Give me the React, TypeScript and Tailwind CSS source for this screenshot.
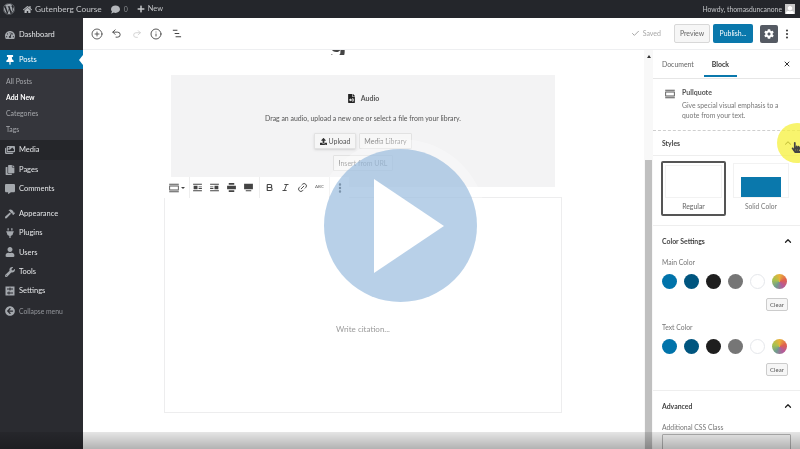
import { Bold, Check, ChevronUp, CirclePlus, Info, Italic, Link2, MoreVertical, Redo2, Undo2, X } from 'lucide-react';
import {
  FaArrowCircleLeft,
  FaCog,
  FaComment,
  FaCommentAlt,
  FaCopy,
  FaFileAudio,
  FaHammer,
  FaHandPointer,
  FaHome,
  FaImages,
  FaPlug,
  FaPlus,
  FaTachometerAlt,
  FaThumbtack,
  FaUpload,
  FaUser,
  FaUserAlt,
  FaWordpress,
  FaWrench,
} from 'react-icons/fa';
import type { ComponentType, ReactNode } from 'react';

type Icon = ComponentType<{ className?: string }>;

function SettingsIcon({ className }: { className?: string }) {
  return (
    <svg viewBox="0 0 20 20" className={className} fill="currentColor">
      <path d="M1 1h18v18H1zM4 5v2h5v2h2V7h5V5h-5V3H9v2zM4 13v2h3v2h2v-2h7v-2H9v-2H7v2z" fillRule="evenodd" />
    </svg>
  );
}

const GROUP_TWO: [Icon, string][] = [
  [FaHammer, 'Appearance'],
  [FaPlug, 'Plugins'],
  [FaUser, 'Users'],
  [FaWrench, 'Tools'],
  [SettingsIcon, 'Settings'],
];

const SWATCHES = [
  'bg-[#0073aa]',
  'bg-[#00557f]',
  'bg-[#1e1e1e]',
  'bg-[#767676]',
  'bg-white border border-gray-200',
  'bg-[conic-gradient(#e8b23a,#e0604e,#b55a9c,#6f9c8f,#a8c24e,#e8b23a)]',
];

function BlockIcon({ className }: { className: string }) {
  return (
    <svg viewBox="0 0 20 20" className={className} fill="currentColor">
      <path d="M2 3h16v1.5H2zM2 15.5h16V17H2z" />
      <path d="M2 6h16v8H2zm1.5 1.5v5h13v-5z" fillRule="evenodd" />
    </svg>
  );
}

function AlignIcon({ variant }: { variant: number }) {
  const paths = [
    'M2 3h16v2H2zM2 15h16v2H2zM3 7h7v6H3zM12 8h6v1.5h-6zM12 11h6v1.5h-6z',
    'M2 3h16v2H2zM2 15h16v2H2zM10 7h7v6h-7zM2 8h6v1.5H2zM2 11h6v1.5H2z',
    'M5 2h10v3H5zM5 15h10v3H5zM2 7h16v6H2z',
    'M2 3h16v10H2zM5 15h10v2H5z',
  ];
  return (
    <svg viewBox="0 0 20 20" className="size-[11px] text-[#444]" fill="currentColor">
      <path d={paths[variant]} />
    </svg>
  );
}

function MenuRow({ icon: I, label, h = 'h-[19px]' }: { icon: Icon; label: string; h?: string }) {
  return (
    <div className={`flex items-center ${h} pl-[5px] text-[7.5px] text-[#e4e6e8]`}>
      <I className="size-[10px] text-[#a4a8ad] mr-[4px]" />
      <span>{label}</span>
    </div>
  );
}

function Sidebar() {
  return (
    <aside className="w-[83px] shrink-0 bg-[#2a2b30] flex flex-col pt-[7px]">
      <MenuRow icon={FaTachometerAlt} label="Dashboard" h="h-[20px]" />
      <div className="h-[5px]" />
      <div className="relative flex items-center h-[19px] pl-[5px] bg-[#0073aa] text-[7.5px] text-white">
        <FaThumbtack className="size-[10px] mr-[4px]" />
        Posts
        <div className="absolute right-0 top-[5px] border-y-[5px] border-r-[4px] border-y-transparent border-r-white" />
      </div>
      <div className="bg-[#35363c] h-[71px] pl-[6px] pt-[6px] flex flex-col gap-[3px] text-[6.9px] leading-[13px] text-[#a6a8ac]">
        <div>All Posts</div>
        <div className="text-white font-bold">Add New</div>
        <div>Categories</div>
        <div>Tags</div>
      </div>
      <div className="bg-[#25262a]">
        <MenuRow icon={FaImages} label="Media" h="h-[20px]" />
      </div>
      <MenuRow icon={FaCopy} label="Pages" />
      <MenuRow icon={FaCommentAlt} label="Comments" />
      <div className="h-[6px]" />
      {GROUP_TWO.map(([i, l]) => (
        <MenuRow key={l} icon={i} label={l} h="h-[19.3px]" />
      ))}
      <div className="flex items-center h-[21px] pl-[5px] text-[6.8px] text-[#92959a]">
        <FaArrowCircleLeft className="size-[10px] text-[#a4a8ad] mr-[4px]" />
        Collapse menu
      </div>
    </aside>
  );
}

function TopBar() {
  return (
    <header className="h-[18px] shrink-0 bg-[#24262b] flex items-center text-[7px] text-[#c4c6c9] pl-[3px] pr-[5px]">
      <FaWordpress className="size-[12px] text-[#a4a8ad]" />
      <FaHome className="size-[9px] text-[#b4b7bb] ml-[8px]" />
      <span className="ml-[3px] text-[8.3px]">Gutenberg Course</span>
      <FaComment className="size-[9px] text-[#b4b7bb] ml-[9px]" />
      <span className="ml-[4px] text-[#8b8e92]">0</span>
      <FaPlus className="size-[8px] text-[#c4c6c9] ml-[9px]" />
      <span className="ml-[3px] text-[7.4px]">New</span>
      <span className="ml-auto text-[6.8px]">Howdy, thomasduncanone</span>
      <span className="ml-[3px] size-[10px] bg-[#c8c8c8] flex items-end justify-center overflow-hidden">
        <FaUserAlt className="size-[8px] text-white" />
      </span>
    </header>
  );
}

function EditorToolbar() {
  return (
    <div className="h-[32px] shrink-0 bg-white border-b border-[#eeeff1] flex items-center pl-[8px] pr-[7px]">
      <CirclePlus className="size-[12px] text-[#444]" strokeWidth={1.7} />
      <Undo2 className="size-[11px] text-[#444] ml-[8px]" strokeWidth={2} />
      <Redo2 className="size-[10px] text-[#ccc] ml-[10px]" strokeWidth={2} />
      <Info className="size-[12px] text-[#444] ml-[8px]" strokeWidth={1.8} />
      <svg viewBox="0 0 12 12" className="size-[11px] text-[#444] ml-[9px]" fill="currentColor">
        <path d="M2 2h5v1H2zM4 5.5h5v1H4zM5 9h6v1H5z" />
      </svg>
      <Check className="size-[9px] text-[#888] ml-auto" strokeWidth={2} />
      <span className="ml-[3px] text-[7px] text-[#a8a8a8]">Saved</span>
      <button className="ml-[13px] w-[36px] h-[19px] rounded-[2px] border border-[#d8d8d8] bg-[#f6f6f6] text-[6.9px] text-[#666]">Preview</button>
      <button className="ml-[3px] w-[40px] h-[19px] rounded-[2px] bg-[#0a78ac] text-[6.9px] text-white">Publish...</button>
      <button className="ml-[7px] size-[18px] rounded-[2px] bg-[#555a63] flex items-center justify-center">
        <FaCog className="size-[10px] text-white" />
      </button>
      <MoreVertical className="size-[12px] text-[#444] ml-[3px]" strokeWidth={2.4} />
    </div>
  );
}

function Ghost({ children, className = '' }: { children: ReactNode; className?: string }) {
  return (
    <span className={`h-[16px] flex items-center justify-center rounded-[1px] border border-[#e2e2e2] text-[7px] whitespace-nowrap ${className}`}>
      {children}
    </span>
  );
}

function AudioBlock() {
  return (
    <div className="ml-[88px] w-[384px] h-[112px] bg-[#f3f3f4] flex flex-col items-center pt-[17px] text-[#555]">
      <div className="flex items-center gap-[5px] text-[7px] font-bold h-[12px]">
        <FaFileAudio className="size-[9px] text-[#222]" />
        Audio
      </div>
      <div className="mt-[8px] text-[6.9px] leading-[12px] whitespace-nowrap">Drag an audio, upload a new one or select a file from your library.</div>
      <div className="mt-[9px] flex gap-[3px]">
        <Ghost className="border-[#d4d4d4] bg-[#f6f6f6] w-[42px] shadow-sm gap-[2px]">
          <FaUpload className="size-[7px] text-[#333]" />
          Upload
        </Ghost>
        <Ghost className="w-[53px] bg-[#f7f7f7] text-[#8a8a8a]">Media Library</Ghost>
      </div>
      <Ghost className="mt-[6px] w-[60px] bg-[#f7f7f7] text-[#8a8a8a]">Insert from URL</Ghost>
    </div>
  );
}

function FloatingToolbar() {
  return (
    <div className="absolute left-[81px] top-[127px] w-[185px] h-[21px] bg-white flex items-center text-[#444]">
      <div className="w-[26px] h-full flex items-center justify-center gap-[1px] border-r border-[#eee]">
        <BlockIcon className="size-[12px] text-[#555]" />
        <span className="border-x-[2px] border-t-[2px] border-x-transparent border-t-[#444]" />
      </div>
      <div className="w-[70px] h-full flex items-center justify-between pl-[2px] pr-[5px] border-r border-[#eee]">
        <AlignIcon variant={0} />
        <AlignIcon variant={1} />
        <AlignIcon variant={2} />
        <AlignIcon variant={3} />
      </div>
      <div className="w-[70px] h-full flex items-center justify-between px-[5px] border-r border-[#eee]">
        <Bold className="size-[9px]" strokeWidth={3} />
        <Italic className="size-[9px]" strokeWidth={2.5} />
        <Link2 className="size-[11px] -rotate-45" strokeWidth={2} />
        <span className="text-[4.5px] text-[#666]">ABC</span>
      </div>
      <MoreVertical className="size-[12px] ml-[4px] text-black" strokeWidth={2.8} />
    </div>
  );
}

function SwatchRow() {
  return (
    <div className="flex gap-[7px] mt-[6px]">
      {SWATCHES.map(s => (
        <span key={s} className={`size-[15px] rounded-full ${s}`} />
      ))}
    </div>
  );
}

function ClearButton() {
  return (
    <div className="flex justify-end mt-[9px] pr-[5px]">
      <span className="w-[22px] h-[13px] flex items-center justify-center rounded-[2px] border border-[#ccc] bg-[#f6f6f6] text-[6px] text-[#555]">
        Clear
      </span>
    </div>
  );
}

function RightPanel() {
  return (
    <aside className="w-[147px] shrink-0 bg-white flex flex-col text-[#444] overflow-hidden">
      <div className="h-[29px] shrink-0 flex items-center border-b border-[#e6e6e6] pl-[9px] pr-[9px] text-[6.9px]">
        <span className="text-[#666]">Document</span>
        <span className="relative h-full flex items-center ml-[17px] font-bold text-[#333] px-[1px]">
          Block
          <span className="absolute -left-[7px] -right-[7px] bottom-[1px] h-[2px] bg-[#0a78ac]" />
        </span>
        <X className="size-[8px] ml-auto text-[#333]" strokeWidth={3} />
      </div>
      <div className="h-[52px] shrink-0 border-b border-dashed border-[#cfcfcf] flex pl-[11px] pt-[7px]">
        <BlockIcon className="size-[12px] text-[#555] mt-[2px] shrink-0" />
        <div className="ml-[6px]">
          <div className="text-[7px] leading-[12px] font-bold text-[#555]">Pullquote</div>
          <div className="text-[6.8px] leading-[10px] text-[#777] mt-[2px] w-[104px]">
            Give special visual emphasis to a quote from your text.
          </div>
        </div>
      </div>
      <div className="h-[25px] shrink-0 flex items-center border-b border-[#eee] pl-[9px] pr-[7px] text-[6.8px] font-bold">
        Styles
        <ChevronUp className="size-[10px] ml-auto text-[#333]" strokeWidth={2.5} />
      </div>
      <div className="h-[70px] shrink-0 flex gap-[5px] pl-[8px] pt-[5px] border-b border-[#eee]">
        <div className="w-[65px] h-[55px] rounded-[2px] border-2 border-[#555] p-[2px] flex flex-col items-center">
          <div className="w-full h-[33px] border border-[#f2f2f2]" />
          <div className="text-[6.9px] text-[#666] mt-[3px]">Regular</div>
        </div>
        <div className="w-[60px] h-[55px] p-[2px] flex flex-col items-center">
          <div className="w-full h-[35px] border border-[#f2f2f2] flex items-end justify-center">
            <div className="w-[40px] h-[20px] bg-[#0a78ac]" />
          </div>
          <div className="text-[6.7px] text-[#777] mt-[3px]">Solid Color</div>
        </div>
      </div>
      <div className="h-[165px] shrink-0 border-b border-[#eee] pl-[9px] pr-[7px] pt-[9px]">
        <div className="flex items-center justify-between text-[6.9px] font-bold h-[12px]">
          Color Settings
          <ChevronUp className="size-[10px] text-[#222]" strokeWidth={3} />
        </div>
        <div className="mt-[9px] text-[6.8px] leading-[12px] text-[#777]">Main Color</div>
        <SwatchRow />
        <ClearButton />
        <div className="mt-[10px] text-[6.8px] leading-[12px] text-[#777]">Text Color</div>
        <SwatchRow />
        <ClearButton />
      </div>
      <div className="pl-[9px] pr-[7px] pt-[9px]">
        <div className="flex items-center justify-between text-[6.9px] font-bold h-[12px]">
          Advanced
          <ChevronUp className="size-[10px] text-[#222]" strokeWidth={3} />
        </div>
        <div className="mt-[9px] text-[6.8px] leading-[12px] text-[#777]">Additional CSS Class</div>
        <div className="mt-[1px] w-[129px] h-[20px] border border-[#bbb] rounded-[1px]" />
      </div>
    </aside>
  );
}

export default function App() {
  return (
    <div
      className="relative w-[800px] h-[449px] overflow-hidden bg-white flex flex-col blur-[0.35px]"
      style={{ fontFamily: 'Lato, "Noto Sans", sans-serif' }}
    >
      <TopBar />
      <div className="flex flex-1 min-h-0">
        <Sidebar />
        <div className="flex-1 min-w-0 flex flex-col">
          <EditorToolbar />
          <div className="flex flex-1 min-h-0">
            <main className="relative flex-1 min-w-0 bg-white overflow-hidden pt-[25px]">
              {/* bottom of the post title scrolled under the toolbar */}
              <div className="absolute left-[246px] top-0 w-[20px] h-[5px] overflow-hidden">
                <div className="absolute bottom-0 left-0 font-['Noto_Sans'] text-[28px] leading-none font-bold text-[#444]">g</div>
              </div>
              <AudioBlock />
              <div className="absolute left-[81px] top-[147px] w-[398px] h-[216px] border border-[#ededee] flex items-end justify-center pb-[77px] text-[8px] text-[#9a9a9a]">
                Write citation...
              </div>
              <FloatingToolbar />
            </main>
            <div className="w-[9px] shrink-0 bg-[#f8f8f8] flex flex-col items-center">
              <div className="h-[12px] flex items-center">
                <span className="border-x-[2.5px] border-b-[3px] border-x-transparent border-b-[#333]" />
              </div>
              <div className="mt-[98px] w-[7px] flex-1 bg-[#c0c0c0]" />
            </div>
            <RightPanel />
          </div>
        </div>
      </div>

      {/* video player overlays */}
      <div className="absolute left-[324px] top-[149px] size-[153px] rounded-full bg-[#a0c0e0]/75 ring-[10px] ring-white/30 flex items-center justify-center">
        <div className="ml-[16px] border-y-[47px] border-l-[70px] border-y-transparent border-l-white" />
      </div>
      <div className="absolute left-[777px] top-[123px] size-[40px] rounded-full bg-[#f6f03c]/75" />
      <FaHandPointer className="absolute left-[791px] top-[142px] size-[11px] text-[#444]" />
      <div className="absolute inset-x-0 bottom-0 h-[17px] bg-gradient-to-b from-black/10 to-black/30" />
    </div>
  );
}
